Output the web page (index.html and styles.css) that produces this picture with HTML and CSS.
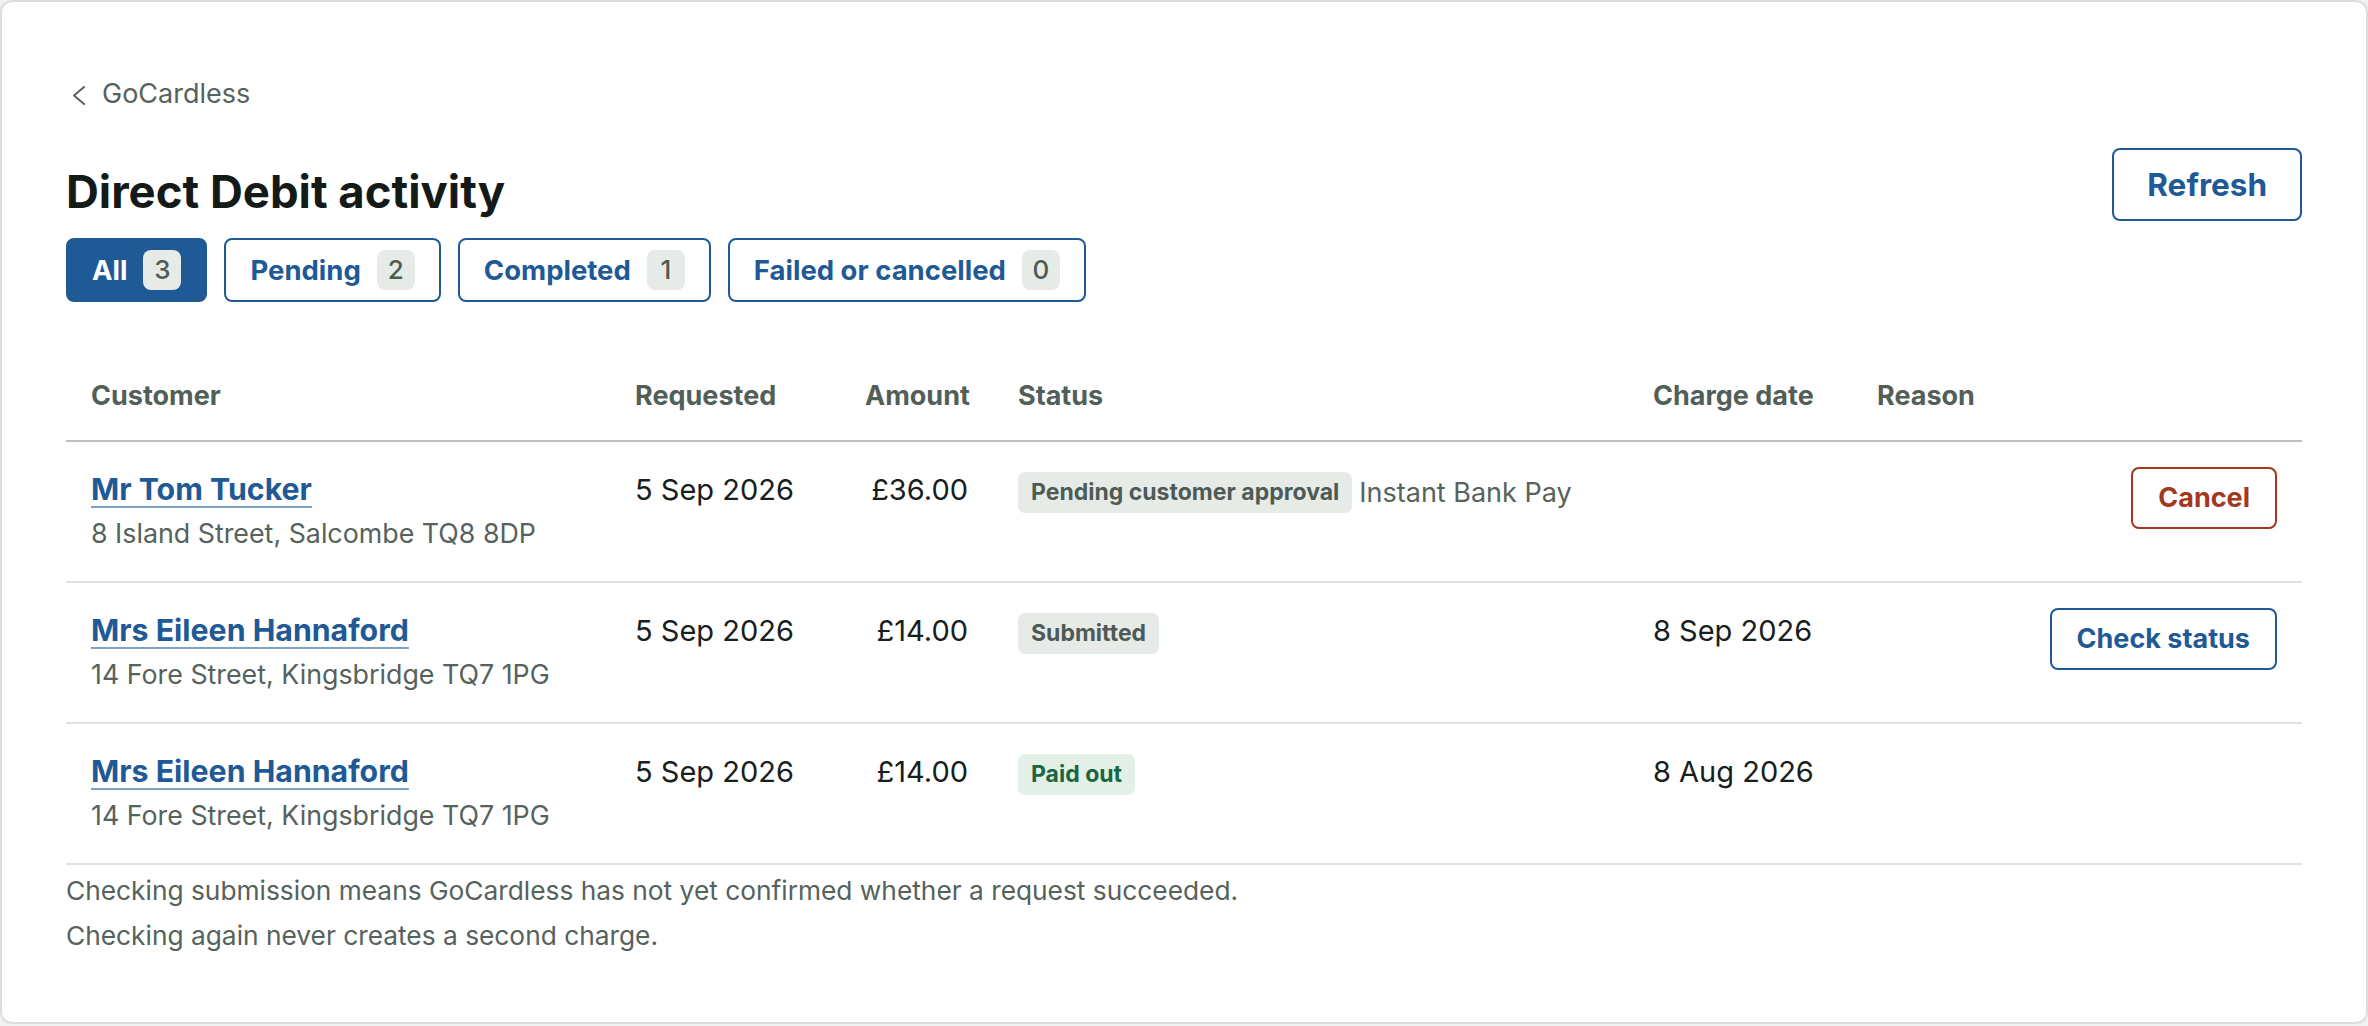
FILE: index.html
```html
<!DOCTYPE html>
<html lang="en">
<head>
<meta charset="utf-8">
<title>Direct Debit activity</title>
<link rel="stylesheet" href="styles.css">
</head>
<body>
<div class="card">
  <a class="back" href="#">
    <svg class="back-icon" width="24" height="24" viewBox="0 0 24 24" aria-hidden="true"><path d="M18 5 L8 13.5 L18 22" fill="none" stroke="currentColor" stroke-width="2" stroke-linecap="round" stroke-linejoin="round"/></svg>
    <span>GoCardless</span>
  </a>

  <div class="head">
    <div class="head-main">
      <h1 class="title">Direct Debit activity</h1>
      <div class="tabs">
        <button class="tab tab-active">All <span class="count">3</span></button>
        <button class="tab">Pending <span class="count">2</span></button>
        <button class="tab">Completed <span class="count">1</span></button>
        <button class="tab">Failed or cancelled <span class="count">0</span></button>
      </div>
    </div>
    <button class="btn btn-blue btn-refresh">Refresh</button>
  </div>

  <table class="activity">
    <colgroup>
      <col class="c-customer">
      <col class="c-requested">
      <col class="c-amount">
      <col class="c-status">
      <col class="c-charge">
      <col class="c-reason">
      <col class="c-actions">
    </colgroup>
    <thead>
      <tr>
        <th>Customer</th>
        <th>Requested</th>
        <th class="num">Amount</th>
        <th>Status</th>
        <th>Charge date</th>
        <th>Reason</th>
        <th class="actions"></th>
      </tr>
    </thead>
    <tbody>
      <tr>
        <td>
          <div class="cust-line"><a class="cust-name" href="#">Mr Tom Tucker</a></div>
          <div class="addr">8 Island Street, Salcombe TQ8 8DP</div>
        </td>
        <td class="val">5 Sep 2026</td>
        <td class="val num">£36.00</td>
        <td><div class="status"><span class="badge">Pending customer approval</span><span class="method">Instant Bank Pay</span></div></td>
        <td class="val"></td>
        <td class="val"></td>
        <td class="actions"><button class="btn btn-red">Cancel</button></td>
      </tr>
      <tr>
        <td>
          <div class="cust-line"><a class="cust-name" href="#">Mrs Eileen Hannaford</a></div>
          <div class="addr">14 Fore Street, Kingsbridge TQ7 1PG</div>
        </td>
        <td class="val">5 Sep 2026</td>
        <td class="val num">£14.00</td>
        <td><div class="status"><span class="badge">Submitted</span></div></td>
        <td class="val">8 Sep 2026</td>
        <td class="val"></td>
        <td class="actions"><button class="btn btn-blue">Check status</button></td>
      </tr>
      <tr>
        <td>
          <div class="cust-line"><a class="cust-name" href="#">Mrs Eileen Hannaford</a></div>
          <div class="addr">14 Fore Street, Kingsbridge TQ7 1PG</div>
        </td>
        <td class="val">5 Sep 2026</td>
        <td class="val num">£14.00</td>
        <td><div class="status"><span class="badge badge-green">Paid out</span></div></td>
        <td class="val">8 Aug 2026</td>
        <td class="val"></td>
        <td class="actions"></td>
      </tr>
    </tbody>
  </table>

  <p class="note">Checking submission means GoCardless has not yet confirmed whether a request succeeded.</p>
  <p class="note">Checking again never creates a second charge.</p>
</div>
</body>
</html>
```

FILE: styles.css
```css
html, body {
  margin: 0;
  padding: 0;
}

body {
  background: #f1f3f2;
  font-family: Inter, "Liberation Sans", sans-serif;
  color: #17201c;
}

.card {
  box-sizing: border-box;
  height: 1024px;
  background: #ffffff;
  border: 2px solid #d9dedb;
  border-radius: 12px;
  padding: 72px 64px 0;
}

.back {
  display: flex;
  align-items: center;
  gap: 12px;
  height: 40px;
  font-size: 27px;
  line-height: 40px;
  color: #56625c;
  text-decoration: none;
}

.back-icon {
  display: block;
  flex: none;
}

.head {
  display: flex;
  justify-content: space-between;
  align-items: flex-start;
  margin-top: 34px;
}

.title {
  margin: 17px 0 0;
  font-size: 45.5px;
  line-height: 53px;
  font-weight: 700;
  color: #141a17;
  letter-spacing: 0;
}

.tabs {
  display: flex;
  gap: 17px;
  margin-top: 20px;
}

.tab {
  display: flex;
  align-items: center;
  gap: 16px;
  font-family: inherit;
  font-size: 27.5px;
  font-weight: 700;
  line-height: 40px;
  padding: 10px 24px;
  border: 2px solid #1f5a96;
  border-radius: 8px;
  background: #ffffff;
  color: #1f5a96;
  cursor: pointer;
}

.tab-active {
  background: #1f5a96;
  color: #ffffff;
}

.count {
  box-sizing: border-box;
  display: inline-flex;
  align-items: center;
  justify-content: center;
  height: 40px;
  min-width: 38px;
  padding: 0 10px;
  border-radius: 8px;
  background: #e6ebe8;
  color: #4e5b55;
  font-size: 26px;
  font-weight: 500;
}

.btn {
  font-family: inherit;
  font-weight: 700;
  font-size: 27px;
  line-height: 40px;
  padding: 9px 25px;
  border: 2px solid #1f5a96;
  border-radius: 8px;
  background: #ffffff;
  color: #1f5a96;
  cursor: pointer;
  white-space: nowrap;
}

.btn-red {
  border-color: #a3371f;
  color: #a3371f;
}

.btn-refresh {
  font-size: 31.5px;
  line-height: 45px;
  padding: 12px 33px;
}

.activity {
  width: 100%;
  margin-top: 49px;
  border-collapse: collapse;
  table-layout: fixed;
}

.c-customer { width: 544px; }
.c-requested { width: 230px; }
.c-amount { width: 153px; }
.c-status { width: 635px; }
.c-charge { width: 224px; }
.c-reason { width: 150px; }
.c-actions { width: auto; }

.activity th {
  text-align: left;
  font-size: 27px;
  font-weight: 700;
  line-height: 39px;
  color: #525e58;
  padding: 25px;
  border-bottom: 2px solid #bcc2bf;
}

.activity td {
  padding: 25px 25px 28px;
  vertical-align: top;
  border-bottom: 2px solid #dde1df;
  font-size: 27px;
  line-height: 39px;
}

.activity .num {
  text-align: right;
}

.activity .actions {
  text-align: right;
  padding-left: 0;
}

.cust-line {
  font-size: 30.3px;
  line-height: 45px;
}

.cust-name {
  font-weight: 700;
  color: #1f5a96;
  text-decoration: underline;
  text-decoration-color: #7fa2c6;
  text-decoration-thickness: 2px;
  text-underline-offset: 6px;
}

.addr {
  margin-top: 2px;
  font-size: 26.8px;
  line-height: 39px;
  color: #56625c;
}

.activity .val {
  font-size: 29px;
  line-height: 45px;
  color: #17201c;
}

.status {
  display: flex;
  align-items: center;
  gap: 7px;
  min-height: 51px;
}

.badge {
  font-size: 23px;
  font-weight: 700;
  line-height: 29px;
  padding: 6px 13px;
  border-radius: 7px;
  background: #e6ebe8;
  color: #4e5b55;
  white-space: nowrap;
}

.badge-green {
  background: #e2f0e8;
  color: #1a6641;
}

.method {
  font-size: 27px;
  line-height: 39px;
  color: #56625c;
  white-space: nowrap;
}

.note {
  margin: 6px 0 0;
  font-size: 26.3px;
  line-height: 39px;
  color: #56625c;
}
```
